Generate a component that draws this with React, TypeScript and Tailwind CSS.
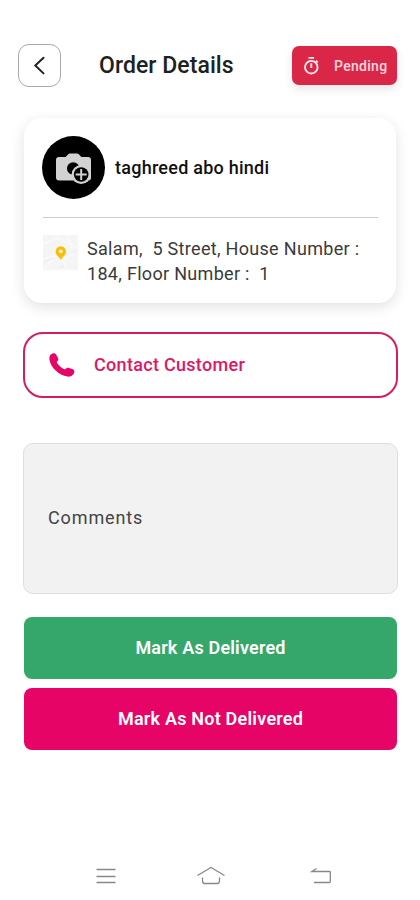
const BackIcon = () => (
    <svg className="w-5 h-5" viewBox="0 0 20 20" fill="none" stroke="#222" strokeWidth="2" strokeLinecap="round">
        <path d="M13.500 1.800 5.300 9.500 13.500 17.400" />
    </svg>
);

const TimerIcon = () => (
    <svg className="w-[18px] h-[20px]" viewBox="0 0 18 20" fill="none" stroke="#fce4e8" strokeWidth="1.9">
        <circle cx="9.300" cy="11.2" r="6.3" />
        <path d="M6.5 1.900h5.6M9.300 7.200v4.800M13.900 4.600l1.8 1.8" />
    </svg>
);

const AddPhotoIcon = () => (
    <svg className="w-[63px] h-[63px]" viewBox="0 0 63 63">
        <circle cx="31.5" cy="31.5" r="31.5" fill="#000" />
        <path d="M17 21h6.500l2.500-2.600q.8-.9 2-.9h7q1.200 0 2 .9l2.500 2.600H46q3 0 3 3v18q0 2.500-3 2.500H17q-3 0-3-3V24q0-3 3-3z" fill="#d2d2d2" />
        <circle cx="31.200" cy="32.500" r="6.200" fill="#000" />
        <circle cx="39.200" cy="38.500" r="9.600" fill="#d2d2d2" />
        <circle cx="39.200" cy="38.500" r="7.300" fill="#000" />
        <path d="M39.200 33v11M33.700 38.500h11" stroke="#d2d2d2" strokeWidth="2" />
    </svg>
);

const MapThumb = () => (
    <svg className="w-[35px] h-[35px]" viewBox="0 0 35 35">
        <rect width="35" height="35" fill="#f5f5f5" />
        <path d="M0 9 14 3l21 10M0 25l11-5 9 5 15-10M11 20 2 35M20 25l4 10M24 0l5 14" stroke="#fafafa" strokeWidth="1.500" fill="none" />
        <path d="M0 27l10-4M16 33l5-2M28 18l7-3" stroke="#eaecee" fill="none" />
        <path d="M17.800 25C15.800 21.500 12.600 20 12.600 16.400a5.200 5.200 0 0 1 10.400 0c0 3.600-3.200 5.100-5.200 8.600z" fill="#fabd0a" />
        <circle cx="17.800" cy="16.300" r="1.900" fill="#fff5cd" />
    </svg>
);

const PhoneIcon = () => (
    <svg className="w-[26px] h-[26px]" viewBox="0 0 26 26" fill="#e60467">
        <path d="M1.500 2.800C2.900 1.300 5.600.600 7 2.200l2.100 4.100c.6 1.400-.1 2.500-1.500 3.700 1.800 3.500 4.800 6.100 8.300 7.400 1.500-1.600 2.700-1.900 4.100-1.500l3.900 1.300c1.900.9 1.800 3.200.6 4.900-1.300 2-3.500 2.900-6.100 2.500C9.900 22.800 1.700 15.500.5 7.900.3 5.700.400 4 1.500 2.800z" />
    </svg>
);

const App = () => {
    return (
        <main className="w-[420px] h-[900px] overflow-hidden bg-white font-[Roboto,sans-serif] flex flex-col">
            <header className="h-[86px] pt-11 pl-[18px] pr-[23px] flex items-start">
                <button className="w-[43px] h-[43px] shrink-0 rounded-[11px] border border-[#aaa] flex items-center justify-center">
                    <BackIcon />
                </button>
                <h1 className="ml-[38px] mt-[6px] w-[193px] text-[23px] leading-8 font-medium tracking-[0.06px] text-[#1c221e] whitespace-nowrap">Order Details</h1>
                <div className="mt-[2px] h-[39px] w-[105px] rounded-[7px] bg-[#da2748] shadow-[0_4px_10px_rgba(0,0,0,0.1)] flex items-center pl-[10px]">
                    <TimerIcon />
                    <span className="ml-[14px] mt-[1px] text-[14px] font-medium tracking-[0.3px] text-[#fbd9df]">Pending</span>
                </div>
            </header>

            <section className="mt-8 mx-6 h-[185px] shrink-0 rounded-[18px] bg-white shadow-[0_4px_14px_rgba(0,0,0,0.12)] px-[18px] pt-[18px]">
                <div className="flex items-center">
                    <AddPhotoIcon />
                    <p className="ml-[10px] text-[18px] font-medium tracking-[0.25px] text-[#111]">taghreed abo hindi</p>
                </div>
                <hr className="mt-[18px] ml-[1px] border-[#ccc]" />
                <div className="mt-[17px] pl-[1px] flex">
                    <MapThumb />
                    <p className="ml-[9px] mt-[1px] text-[18px] leading-[25px] tracking-[0.31px] text-[#3a3a3a] whitespace-pre">{'Salam,  5 Street, House Number :\n184, Floor Number :  1'}</p>
                </div>
            </section>

            <button className="mt-[29px] ml-[23px] w-[375px] h-[66px] shrink-0 rounded-[20px] border-2 border-[#d51d61] flex items-center pl-[24px]">
                <PhoneIcon />
                <span className="ml-[19px] -mt-[2px] text-[18px] font-medium tracking-[0.3px] text-[#dc1765]">Contact Customer</span>
            </button>

            <div className="mt-[45px] ml-[23px] w-[375px] h-[151px] shrink-0 rounded-[10px] border border-[#dedede] bg-[#f2f2f2] flex items-center pl-[24px]">
                <span className="-mt-[2px] text-[18px] tracking-[0.88px] text-[#444]">Comments</span>
            </div>

            <div className="mt-[23px] mx-6 mr-[23px] flex flex-col gap-[9px]">
                <button className="h-[62px] rounded-[8px] bg-[#36a76a] pb-[2px] text-[18px] font-semibold tracking-[0.18px] text-white">Mark As Delivered</button>
                <button className="h-[62px] rounded-[8px] bg-[#e60467] pb-[2px] text-[18px] font-semibold tracking-[0.22px] text-white">Mark As Not Delivered</button>
            </div>

            <nav className="mt-[115px] pl-[95px] flex items-center">
                <svg className="w-[22px] h-[22px]" viewBox="0 0 22 22" stroke="#888" strokeWidth="1.300">
                    <path d="M1.500 4.500h19M1.500 11.500h19M1.500 17.500h19" />
                </svg>
                <svg className="ml-[79px] w-[30px] h-[22px]" viewBox="0 0 30 22" fill="none" stroke="#888" strokeWidth="1.300">
                    <path d="M1.500 10.500 15 2.500l13.500 8M6.500 12.500v3q0 3 2 3h13q2 0 2-3v-3" />
                </svg>
                <svg className="ml-[84px] w-[22px] h-[22px]" viewBox="0 0 22 22" fill="none" stroke="#888" strokeWidth="1.300">
                    <path d="M6.500 3.500 2 6.500h17.500q.8 0 .8.800v9.400q0 .8-.8.800H4" />
                </svg>
            </nav>
        </main>
    );
};

export default App;
